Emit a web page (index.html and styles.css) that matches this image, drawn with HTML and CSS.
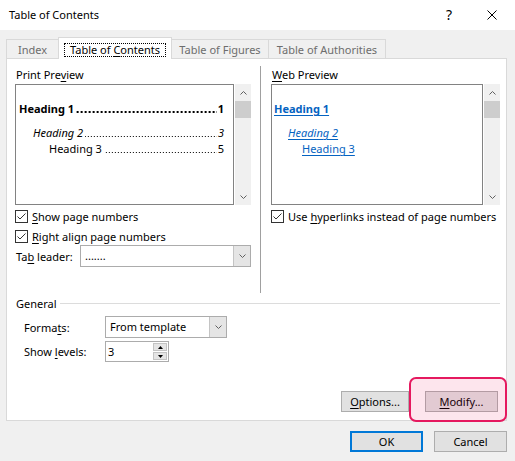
FILE: index.html
```html
<!DOCTYPE html>
<html>
<head>
<meta charset="utf-8">
<title>Table of Contents</title>
<link rel="stylesheet" href="styles.css">
</head>
<body>
<div class="titlebar">
  <span class="title">Table of Contents</span>
  <span class="help">?</span>
  <svg class="close" width="10" height="10" viewBox="0 0 10 10"><path d="M0.5 0.5L9.5 9.5M9.5 0.5L0.5 9.5" stroke="#000" stroke-width="1" fill="none"/></svg>
</div>

<div class="tabs">
  <div class="tab tab-index">Index</div>
  <div class="tab tab-active"><span class="focus">Table of <u>C</u>ontents</span></div>
  <div class="tab tab-figures">Table of Figures</div>
  <div class="tab tab-auth">Table of Authorities</div>
</div>

<div class="panel">
  <div class="previews">
    <div class="col col-print">
      <div class="label">Print Pre<u>v</u>iew</div>
      <div class="preview-wrap">
        <div class="preview">
          <div class="toc toc-1"><span class="name">Heading 1</span><span class="leader"></span><span class="num">1</span></div>
          <div class="toc toc-2"><span class="name">Heading 2</span><span class="leader"></span><span class="num">3</span></div>
          <div class="toc toc-3"><span class="name">Heading 3</span><span class="leader"></span><span class="num">5</span></div>
        </div>
        <div class="scrollbar">
          <div class="sb-btn"><svg width="7" height="4" viewBox="0 0 7 4"><path d="M0.5 3.5L3.5 0.5L6.5 3.5" stroke="#606060" fill="none"/></svg></div>
          <div class="sb-thumb"></div>
          <div class="sb-space"></div>
          <div class="sb-btn"><svg width="7" height="4" viewBox="0 0 7 4"><path d="M0.5 0.5L3.5 3.5L6.5 0.5" stroke="#606060" fill="none"/></svg></div>
        </div>
      </div>
      <div class="check">
        <span class="cb"><svg width="11" height="11" viewBox="0 0 11 11"><path d="M1.5 5.5L4 8L9.5 2.5" stroke="#333" fill="none"/></svg></span>
        <span><u>S</u>how page numbers</span>
      </div>
      <div class="check">
        <span class="cb"><svg width="11" height="11" viewBox="0 0 11 11"><path d="M1.5 5.5L4 8L9.5 2.5" stroke="#333" fill="none"/></svg></span>
        <span><u>R</u>ight align page numbers</span>
      </div>
      <div class="leader-row">
        <span class="lbl">Ta<u>b</u> leader:</span>
        <div class="select select-leader">
          <span class="val">.......</span>
          <span class="dd"><svg width="7" height="4" viewBox="0 0 7 4"><path d="M0.5 0.5L3.5 3.5L6.5 0.5" stroke="#606060" fill="none"/></svg></span>
        </div>
      </div>
    </div>

    <div class="vsep"></div>

    <div class="col col-web">
      <div class="label"><u>W</u>eb Preview</div>
      <div class="preview-wrap">
        <div class="preview web">
          <div class="link link-1">Heading 1</div>
          <div class="link link-2">Heading 2</div>
          <div class="link link-3">Heading 3</div>
        </div>
        <div class="scrollbar">
          <div class="sb-btn"><svg width="7" height="4" viewBox="0 0 7 4"><path d="M0.5 3.5L3.5 0.5L6.5 3.5" stroke="#606060" fill="none"/></svg></div>
          <div class="sb-thumb"></div>
          <div class="sb-space"></div>
          <div class="sb-btn"><svg width="7" height="4" viewBox="0 0 7 4"><path d="M0.5 0.5L3.5 3.5L6.5 0.5" stroke="#606060" fill="none"/></svg></div>
        </div>
      </div>
      <div class="check">
        <span class="cb"><svg width="11" height="11" viewBox="0 0 11 11"><path d="M1.5 5.5L4 8L9.5 2.5" stroke="#333" fill="none"/></svg></span>
        <span>Use <u>h</u>yperlinks instead of page numbers</span>
      </div>
    </div>
  </div>

  <div class="general">
    <span class="lbl">General</span>
    <span class="line"></span>
  </div>

  <div class="field field-formats">
    <span class="lbl">Forma<u>t</u>s:</span>
    <div class="select select-formats">
      <span class="val">From template</span>
      <span class="dd"><svg width="7" height="4" viewBox="0 0 7 4"><path d="M0.5 0.5L3.5 3.5L6.5 0.5" stroke="#606060" fill="none"/></svg></span>
    </div>
  </div>

  <div class="field field-levels">
    <span class="lbl">Show <u>l</u>evels:</span>
    <div class="spin">
      <span class="val">3</span>
      <span class="arrows">
        <span class="arrow"><svg width="5" height="3" viewBox="0 0 5 3"><path d="M0 3L2.5 0L5 3Z" fill="#000"/></svg></span>
        <span class="arrow"><svg width="5" height="3" viewBox="0 0 5 3"><path d="M0 0L2.5 3L5 0Z" fill="#000"/></svg></span>
      </span>
    </div>
  </div>

  <div class="panel-buttons">
    <div class="btn btn-options"><span><u>O</u>ptions...</span></div>
    <div class="hl">
      <div class="btn btn-modify"><span><u>M</u>odify...</span></div>
      <span class="hl-ring"></span>
    </div>
  </div>
</div>

<div class="dialog-buttons">
  <div class="btn btn-ok">OK</div>
  <div class="btn btn-cancel">Cancel</div>
</div>
</body>
</html>
```

FILE: styles.css
```css
* { box-sizing: border-box; }
html, body { margin: 0; padding: 0; }
body {
  background: #f0f0f0;
  font-family: "Noto Sans", "Open Sans", sans-serif;
  font-size: 11px;
  color: #000;
  width: 515px;
  height: 461px;
  overflow: hidden;
}
u { text-decoration: underline; text-underline-offset: 2px; }

/* title bar */
.titlebar {
  height: 30px;
  background: #fff;
  display: flex;
  align-items: center;
  padding: 0 18px 0 9px;
}
.title { flex: 1; line-height: 16px; }
.help { font-size: 14px; line-height: 16px; margin-right: 35px; }
.close { display: block; }

/* tabs */
.tabs {
  display: flex;
  align-items: flex-end;
  height: 21px;
  margin: 7px 0 0 6px;
}
.tab {
  height: 19px;
  border: 1px solid #d9d9d9;
  border-bottom: 0;
  margin-right: -1px;
  background: #f0f0f0;
  color: #6d6d6d;
  display: flex;
  align-items: center;
  justify-content: center;
  padding-top: 2px;
  line-height: 14px;
  white-space: nowrap;
}
.tab-index { width: 53px; }
.tab-active {
  width: 114px;
  height: 22px;
  margin-bottom: -1px;
  background: #fff;
  color: #000;
  position: relative;
  z-index: 1;
  padding-top: 3px;
}
.tab-figures { width: 98px; }
.tab-auth { width: 118px; }
.focus {
  border: 1px dotted #000;
  padding: 0 5px;
  line-height: 12px;
}

/* panel */
.panel {
  margin: 0 8px 0 6px;
  background: #fff;
  border: 1px solid #d9d9d9;
  padding: 7px 6px 8px 8px;
}
.previews { display: flex; }
.col-print { width: 236px; padding-bottom: 26px; }
.col-web { width: 229px; }
.vsep { width: 1px; background: #a0a0a0; margin: 0 10px 0 9px; }
.label { height: 17px; line-height: 17px; padding-left: 1px; }

.preview-wrap {
  display: flex;
  gap: 1px;
  height: 121px;
  margin-top: 1px;
}
.preview {
  flex: 1;
  min-width: 0;
  border: 1px solid #828282;
  padding: 16px 9px 0 3px;
  background: #fff;
}
.toc {
  display: flex;
  line-height: 16px;
  white-space: nowrap;
}
.toc .leader {
  flex: 1;
  min-width: 0;
  margin: 0 1px 0 2px;
  background-image: linear-gradient(to right, #000 1px, transparent 1px);
  background-size: 3px 1px;
  background-repeat: repeat-x;
  background-position: right 0 bottom 4px;
}
.toc-1 .leader {
  background-image: linear-gradient(to right, #000 2px, transparent 2px);
  background-size: 4px 2px;
  background-position: right 0 bottom 4px;
}
.toc-1 { font-weight: bold; }
.toc-2 { margin-top: 8px; padding-left: 14px; }
.toc-2 .name, .toc-2 .num { font-style: italic; }
.toc-3 { padding-left: 30px; }

.preview.web { padding-left: 2px; }
.link {
  line-height: 16px;
  color: #0563c1;
  text-decoration: underline;
  text-underline-offset: 2px;
}
.link-1 { font-weight: bold; }
.link-2 { margin-top: 8px; padding-left: 14px; font-style: italic; }
.link-3 { padding-left: 28px; }

.scrollbar {
  width: 16px;
  background: #f0f0f0;
  display: flex;
  flex-direction: column;
}
.sb-btn {
  height: 17px;
  display: flex;
  align-items: center;
  justify-content: center;
}
.sb-btn svg { display: block; }
.sb-thumb { height: 17px; background: #cdcdcd; }
.sb-space { flex: 1; }

/* checkboxes */
.check {
  display: flex;
  align-items: center;
  gap: 4px;
  height: 18px;
  margin-top: 2px;
  white-space: nowrap;
}
.cb {
  width: 13px;
  height: 13px;
  border: 1px solid #333;
  background: #fff;
  flex: none;
}
.cb svg { display: block; }

/* selects */
.leader-row { display: flex; align-items: center; height: 22px; }
.leader-row .lbl { width: 65px; padding-left: 1px; }
.select {
  display: flex;
  height: 22px;
  border: 1px solid #acacac;
  background: #fff;
}
.select-leader { width: 171px; }
.select-formats { width: 122px; }
.select .val { flex: 1; padding-left: 4px; line-height: 20px; }
.select .dd {
  width: 17px;
  background: #e5e5e5;
  border-left: 1px solid #c4c4c4;
  display: flex;
  align-items: center;
  justify-content: center;
}
.select .dd svg { display: block; }

/* general */
.general { display: flex; align-items: center; height: 16px; margin-top: 2px; }
.general .lbl { width: 45px; padding-left: 1px; }
.general .line { flex: 1; height: 1px; background: #dcdcdc; }

.field { display: flex; align-items: center; padding-left: 9px; }
.field .lbl { width: 81px; }
.field-formats { margin-top: 5px; }
.field-levels { margin-top: 3px; }
.spin {
  display: flex;
  width: 64px;
  height: 21px;
  border: 1px solid #acacac;
  background: #fff;
}
.spin .val { flex: 1; padding-left: 2px; line-height: 19px; }
.spin .arrows {
  width: 14px;
  margin: 1px 1px 1px 0;
  display: flex;
  flex-direction: column;
  gap: 1px;
}
.spin .arrow {
  flex: 1;
  background: #e5e5e5;
  border: 1px solid #c4c4c4;
  display: flex;
  align-items: center;
  justify-content: center;
}
.spin .arrow svg { display: block; }

/* buttons */
.panel-buttons {
  display: flex;
  justify-content: flex-end;
  gap: 16px;
  margin-top: 29px;
  padding-right: 2px;
}
.btn {
  height: 21px;
  background: #e1e1e1;
  border: 1px solid #adadad;
  display: flex;
  align-items: center;
  justify-content: center;
  line-height: 14px;
}
.btn-options { width: 68px; }
.btn-modify { width: 73px; }
.hl { position: relative; }
.hl-ring {
  position: absolute;
  top: -14px;
  right: -9px;
  bottom: -10px;
  left: -16px;
  border: 2px solid #e5195f;
  border-radius: 7px;
  background: rgba(240, 0, 80, 0.1);
}

.dialog-buttons {
  display: flex;
  justify-content: flex-end;
  gap: 11px;
  margin: 10px 8px 0 0;
}
.btn-ok { width: 73px; border: 2px solid #0078d7; }
.btn-cancel { width: 73px; }
```
